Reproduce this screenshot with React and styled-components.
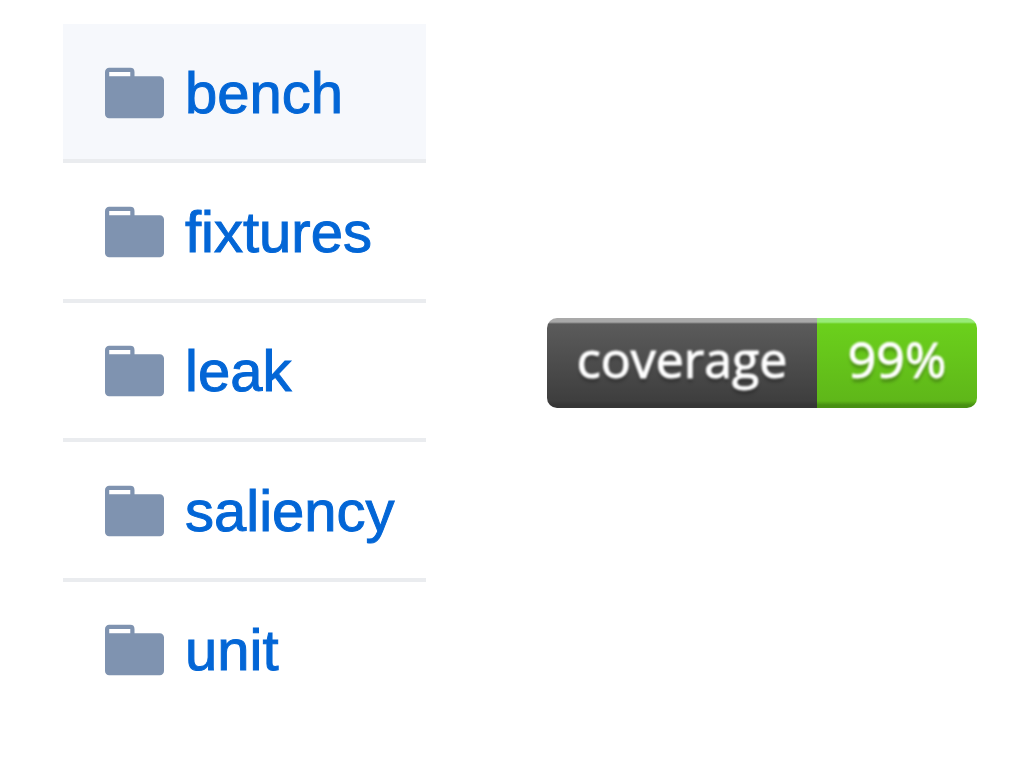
import React from "react";
import styled, { createGlobalStyle } from "styled-components";

const GlobalStyle = createGlobalStyle`
  * { box-sizing: border-box; }
  body { margin: 0; background: #fff; }
`;

const Page = styled.main`
  display: grid;
  grid-template-columns: minmax(0, 363fr) minmax(0, 430fr);
  column-gap: 121px;
  align-items: start;
  padding: 24px 47px 48px 63px;
`;

const FileList = styled.ul`
  display: grid;
  grid-auto-rows: 1fr;
  min-height: 697px;
  margin: 0;
  padding: 0;
  list-style: none;
`;

const FileRow = styled.li`
  display: flex;
  align-items: center;
  gap: 21px;
  padding: 2px 0 0 42px;
  background: ${(p) => (p.$active ? "#f6f8fc" : "transparent")};
  border-bottom: 4px solid #eaecef;

  &:last-child { border-bottom-color: transparent; }
`;

const FolderSvg = styled.svg`
  flex: none;
  width: 59px;
  height: 68px;
`;

const FileLink = styled.a`
  color: #0366d6;
  font: 400 58px/80px "Liberation Sans", Arial, sans-serif;
  -webkit-text-stroke: 1px #0366d6;
  text-decoration: none;
  white-space: nowrap;
`;

const Badge = styled.div`
  display: flex;
  height: 90px;
  margin-top: 294px;
  border-radius: 10px;
  overflow: hidden;
  color: #fff;
  font: 500 50px/82px "Open Sans", "DejaVu Sans", sans-serif;
`;

const BadgePart = styled.span`
  flex: ${(p) => p.$grow} 1 0;
  text-align: center;
  background: linear-gradient(
    ${(p) => p.$edgeTop} 4px,
    ${(p) => p.$top} 6px,
    ${(p) => p.$bottom} 83px,
    ${(p) => p.$edgeBottom} 87px
  );
`;

const BadgeText = styled.span`
  filter: blur(1px);
  -webkit-text-stroke: 1px #fff;
  text-shadow: 0 4px 3px rgba(1, 1, 1, 0.3);
`;

const files = ["bench", "fixtures", "leak", "saliency", "unit"];

function FolderIcon() {
  return (
    <FolderSvg viewBox="0 0 14 16" aria-hidden="true">
      <path fill="#fff" d="M1 3h5v1H1z" />
      <path
        fill="#7f93b0"
        fillRule="evenodd"
        d="M13 4H7V3c0-.66-.31-1-1-1H1c-.55 0-1 .45-1 1v10c0 .55.45 1 1 1h12c.55 0 1-.45 1-1V5c0-.55-.45-1-1-1zM6 4H1V3h5v1z"
      />
    </FolderSvg>
  );
}

export default function App() {
  return (
    <>
      <GlobalStyle />
      <Page>
        <FileList>
          {files.map((name, i) => (
            <FileRow key={name} $active={i === 0}>
              <FolderIcon />
              <FileLink href={`#${name}`}>{name}</FileLink>
            </FileRow>
          ))}
        </FileList>
        <Badge>
          <BadgePart $grow={27} $edgeTop="#a9a9a9" $top="#5b5b5b" $bottom="#3e3e3e" $edgeBottom="#363636">
            <BadgeText>coverage</BadgeText>
          </BadgePart>
          <BadgePart $grow={16} $edgeTop="#98eb78" $top="#6bd01c" $bottom="#5fb719" $edgeBottom="#489012">
            <BadgeText>99%</BadgeText>
          </BadgePart>
        </Badge>
      </Page>
    </>
  );
}
